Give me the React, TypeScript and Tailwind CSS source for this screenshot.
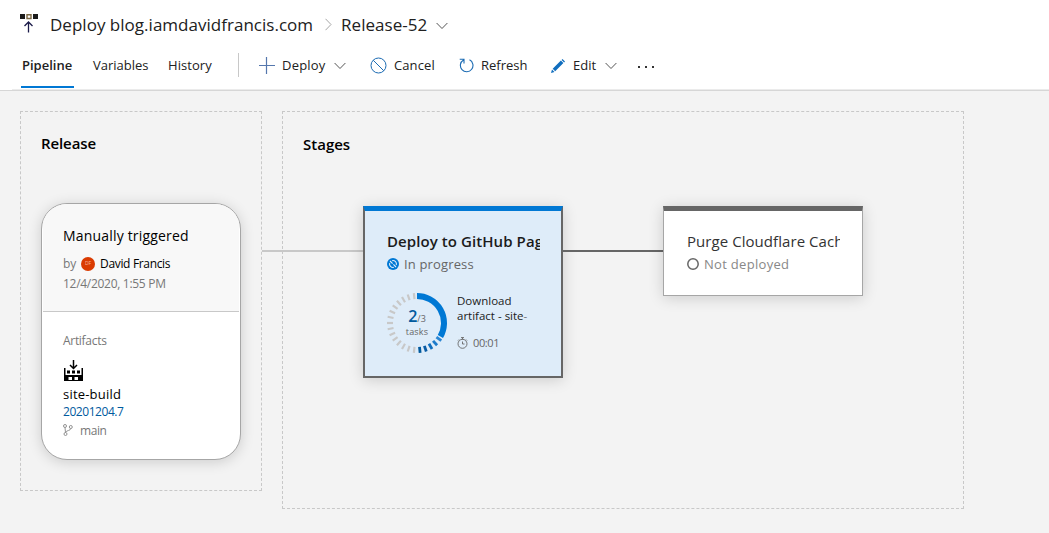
import type { ReactNode } from "react";

function Chevron({ className = "" }: { className?: string }) {
  return (
    <svg className={className} width="12" height="8" viewBox="0 0 12 8" fill="none" stroke="#555" strokeWidth="1">
      <path d="M0.6 1 6 6.5 11.4 1" />
    </svg>
  );
}

function ReleaseIcon() {
  return (
    <svg width="18" height="19" viewBox="0 0 18 19" fill="none">
      <path d="M0 0h5v5H0zM13 0h5v5h-5z" fill="#1b1b1b" />
      <path d="M7 .7h4v3.800H7z" stroke="#7d6a45" strokeWidth="1.4" />
      <path d="M8.500 18.500V8M4.500 12l4-4 4 4" stroke="#1b1b4a" strokeWidth="1.300" />
    </svg>
  );
}

function BuildIcon() {
  return (
    <svg width="19" height="21" viewBox="0 0 19 21" fill="none">
      <path d="M0 8h1.500v7h16V8H19v13H0z" fill="#000" />
      <path d="M3 10.500h3v3H3zM8 10.500h3v3H8zM13 10.500h3v3h-3z" fill="#000" />
      <path d="M4.500 17h3.500v3H4.500zM10.500 17H14v3h-3.500z" fill="#fff" />
      <path d="M9.500 0v8M6 5l3.500 3.500L13 5" stroke="#000" strokeWidth="1.500" />
    </svg>
  );
}

function ProgressRing() {
  const ticks = Array.from({ length: 20 }, (_, i) => 126 + i * 12);
  const blues = ["#2b86d3", "#1c7bcb", "#106ebe", "#0a5ca6", "#005a9e"];
  return (
    <svg className="col-start-1 row-start-1" width="60" height="60" viewBox="-30 -30 60 60" fill="none">
      <path d="M0 -27A27 27 0 0 1 23.380 13.500" stroke="#0078d4" strokeWidth="6" />
      {ticks.map((a, i) => (
        <path key={a} d="M0 -30V-24" stroke={blues[i] ?? "#c8c8c8"} strokeWidth={i < 5 ? 2.8 : 2.2} transform={`rotate(${a})`} />
      ))}
    </svg>
  );
}

function Command({ children, className }: { children: ReactNode; className: string }) {
  return <div className={`mt-[2px] flex h-[23px] items-center whitespace-nowrap ${className}`}>{children}</div>;
}

export default function App() {
  return (
    <div className="h-[533px] w-[1049px] overflow-hidden bg-[#f3f3f3] font-['Open_Sans','Noto_Sans',sans-serif] text-[13px] text-[#212121]">
      <header className="flex h-[91px] flex-col border-b border-[#d6d6d6] bg-white">
        <div className="mt-[12px] flex h-[26px] items-center pl-5 text-[17px] whitespace-nowrap">
          <div className="-mt-[3px]"><ReleaseIcon /></div>
          <span className="ml-3 w-[263px] tracking-[0.020px]">Deploy blog.iamdavidfrancis.com</span>
          <svg className="ml-3 -mt-0.5" width="7" height="13" viewBox="0 0 7 13" fill="none" stroke="#a6a6a6">
            <path d="M0.500 0.800 6 6.500 0.500 12.200" />
          </svg>
          <span className="ml-[9px] w-[86px] tracking-[0.050px]">Release-52</span>
          <Chevron className="mt-px ml-[9px]" />
        </div>
        <div className="mt-[14px] flex h-9 items-start pl-[21px]">
          <div className="flex h-9 w-[53px] border-b-2 border-[#0078d4] font-semibold">
            <span className="pl-px leading-[27px]">Pipeline</span>
          </div>
          <span className="ml-[19px] w-[56px] leading-[27px]">Variables</span>
          <span className="ml-[19px] w-[44px] leading-[27px] tracking-[0.050px]">History</span>
          <div className="mt-px ml-[26px] h-6 w-px bg-[#c8c8c8]" />
          <Command className="ml-5 w-[89px]">
            <svg width="16" height="17" viewBox="0 0 16 17" fill="none" stroke="#5577ad" strokeWidth="1.200">
              <path d="M7.500 0v17M0 8.500h16" />
            </svg>
            <span className="ml-[7px] w-[44px] tracking-[0.200px]">Deploy</span>
            <Chevron className="ml-[8px]" />
          </Command>
          <Command className="ml-[22px] w-[66px]">
            <svg width="17" height="17" viewBox="0 0 17 17" fill="none" stroke="#1b6bb3">
              <circle cx="8.500" cy="8.500" r="7.500" />
              <path d="m3.300 3.300 10.400 10.400" />
            </svg>
            <span className="ml-[7px] tracking-[0.100px]">Cancel</span>
          </Command>
          <Command className="ml-[23px] w-[69px]">
            <svg width="15" height="15" viewBox="0 0 15 15" fill="none" stroke="#1b6bb3" strokeWidth="1.100">
              <path d="M10.500 1.800A6.300 6.300 0 1 1 4.500 2M0.700 1.200h4.300v4.300" />
            </svg>
            <span className="ml-[7px]">Refresh</span>
          </Command>
          <Command className="ml-[23px]">
            <svg width="14" height="14" viewBox="0 0 14 14" fill="#106ebe">
              <path d="M0 14 1 10.500 3.500 13zM1.700 9.800 9.900 1.600l2.500 2.500-8.200 8.200zM10.600 0.900 11.500 0 14 2.500l-.9.900z" />
            </svg>
            <span className="ml-2 w-[24px]">Edit</span>
            <Chevron className="ml-2" />
          </Command>
          <svg className="mt-[14px] ml-[21px]" width="17" height="3" fill="#333">
            <path d="M0 0h2v2H0zM7 0h2v2H7zM14 0h2v2h-2z" />
          </svg>
        </div>
        <div className="mt-px ml-3 h-px bg-[#ebebeb]" />
      </header>

      <main className="flex items-start pt-5 pl-5">
        <section className="h-[380px] w-[242px] border border-dashed border-[#c8c8c8] px-5 text-[12px]">
          <h2 className="mt-[19px] h-6 text-[15px] leading-6 font-semibold tracking-[-0.100px] text-black">Release</h2>
          <div className="mt-[48px] h-[257px] w-[200px] overflow-hidden rounded-[26px] border border-[#a6a6a6] bg-white shadow-[0_2px_14px_rgba(0,0,0,0.16)]">
            <div className="mx-px h-[108px] border-b border-[#c8c8c8] bg-[#f8f8f8] pt-[22px] pl-5">
              <div className="h-5 text-[14px] leading-5 tracking-[0.180px] text-black">Manually triggered</div>
              <div className="mt-2 flex h-5 items-center">
                <span className="w-[18px] text-[#777]">by</span>
                <span className="flex size-[14px] items-center justify-center rounded-full bg-[#da3b01] text-[5px] text-[#f3b39c]">DF</span>
                <span className="ml-[5px] tracking-[-0.330px] text-black">David Francis</span>
              </div>
              <div className="h-5 leading-5 tracking-[-0.290px] text-[#777]">12/4/2020, 1:55 PM</div>
            </div>
            <div className="pl-[21px]">
              <div className="mt-[19px] h-5 leading-5 tracking-[-0.300px] text-[#777]">Artifacts</div>
              <div className="mt-[9px] ml-px"><BuildIcon /></div>
              <div className="mt-[4px] h-[18px] text-[13px] leading-[18px] tracking-[0.200px] text-black">site-build</div>
              <div className="h-[17px] leading-[17px] tracking-[-0.450px] text-[#005a9e]">20201204.7</div>
              <div className="mt-[2px] flex h-[17px] items-center tracking-[-0.450px] text-[#777]">
                <svg className="mr-[7px] -mt-px" width="10" height="12" viewBox="0 0 10 12" fill="none" stroke="#888" strokeWidth=".9">
                  <circle cx="2" cy="2" r="1.500" />
                  <circle cx="2.500" cy="10" r="1.500" />
                  <circle cx="7.800" cy="3" r="1.500" />
                  <path d="M2 3.500 2.500 8.500M7.800 4.500C7.500 7 3.500 6 2.500 8.500" />
                </svg>
                main
              </div>
            </div>
          </div>
        </section>
        <div className="mt-[139px] h-[2px] w-5 bg-[#c8c8c8]" />
        <section className="h-[398px] w-[682px] border border-dashed border-[#c8c8c8]">
          <h2 className="mt-[20px] h-6 pl-5 text-[15px] leading-6 font-semibold text-black">Stages</h2>
          <div className="mt-[50px] -ml-px flex items-start">
            <div className="mt-[44px] h-[2px] w-[81px] bg-[#c8c8c8]" />
            <article className="h-[172px] w-[200px] border-2 border-t-[5px] border-[#666] border-t-[#0078d4] bg-[#deecf9] pl-[22px] shadow-[0_2px_14px_rgba(0,0,0,0.16)]">
              <div className="mt-[18px] h-6 w-[153px] overflow-hidden text-[15px] leading-6 font-semibold tracking-[0.080px] whitespace-nowrap text-[#1b1b1b]">Deploy to GitHub Pages</div>
              <div className="mt-[2px] flex h-5 items-center text-[13px] tracking-[0.150px] text-[#666]">
                <svg className="-mt-[3px] mr-[5px]" width="12" height="12" viewBox="0 0 12 12" fill="none">
                  <circle cx="6" cy="6" r="6" fill="#0078d4" />
                  <path d="M2.700 5A3.500 3.500 0 0 0 6.800 9.400M9.300 7A3.500 3.500 0 0 0 5.200 2.600M3 3l2.600 2.600M9 9 6.400 6.400" stroke="#deecf9" strokeWidth="1.100" />
                </svg>
                In progress
              </div>
              <div className="mt-[18px] flex items-start text-[12px]">
                <div className="grid size-[60px] place-items-center">
                  <ProgressRing />
                  <div className="col-start-1 row-start-1 mt-0.5 text-center text-[9px] leading-[13px] text-[#666]">
                    <div><span className="text-[16px] font-semibold text-[#005a9e]">2</span>/3</div>
                    <div className="tracking-[0.150px]">tasks</div>
                  </div>
                </div>
                <div className="ml-[10px] w-[72px]">
                  <div className="h-[30px] text-[11.500px] leading-[15px] whitespace-nowrap">Download<br />artifact - site<span className="text-[#777]">-</span></div>
                  <div className="mt-[12px] flex h-4 items-center text-[11px] tracking-[-0.400px] text-[#666]">
                    <svg className="mr-[5px]" width="11" height="12" viewBox="0 0 11 12" fill="none" stroke="#666" strokeWidth=".9">
                      <circle cx="5.500" cy="6.800" r="4.500" />
                      <path d="M4 .6h3M5.500 .6v2M5.500 4.500V7H7.500M9 2.500l1 1M2 2.500l-1 1" />
                    </svg>
                    00:01
                  </div>
                </div>
              </div>
            </article>
            <div className="mt-[44px] h-[2px] w-[100px] bg-[#666]" />
            <article className="h-[90px] w-[200px] border border-t-[5px] border-[#a6a6a6] border-t-[#666] bg-white pl-[23px] shadow-[0_2px_14px_rgba(0,0,0,0.16)]">
              <div className="mt-[18px] h-6 w-[153px] overflow-hidden text-[15px] leading-6 tracking-[0.060px] whitespace-nowrap text-[#333]">Purge Cloudflare Cache</div>
              <div className="mt-[2px] flex h-5 items-center text-[13px] tracking-[0.300px] text-[#888]">
                <svg className="-mt-[3px] mr-[5px]" width="12" height="12" viewBox="0 0 12 12" fill="none">
                  <circle cx="6" cy="6" r="5.200" stroke="#666" strokeWidth="1.500" />
                </svg>
                Not deployed
              </div>
            </article>
          </div>
        </section>
      </main>
    </div>
  );
}
